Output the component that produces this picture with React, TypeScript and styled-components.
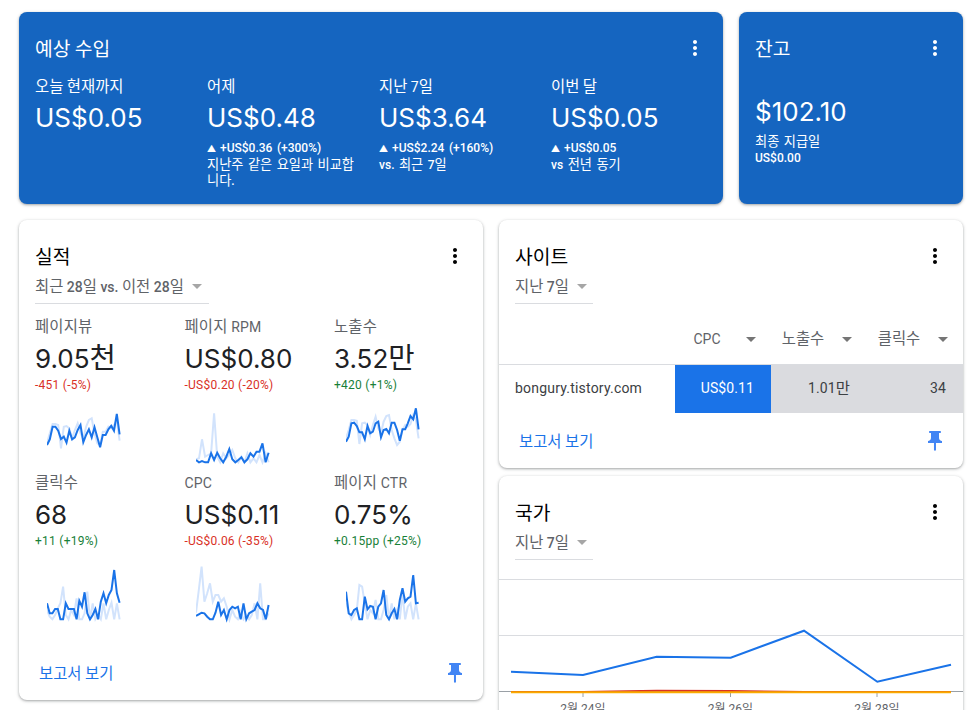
import React from 'react';
import styled, { createGlobalStyle } from 'styled-components';

const GlobalStyle = createGlobalStyle`
  html, body {
    margin: 0;
    padding: 0;
    background: #fff;
    font-family: Roboto, "Noto Sans CJK KR", sans-serif;
  }
`;

const DOTS =
  'M12 8c1.1 0 2-.9 2-2s-.9-2-2-2-2 .9-2 2 .9 2 2 2zm0 2c-1.1 0-2 .9-2 2s.9 2 2 2 2-.9 2-2-.9-2-2-2zm0 6c-1.1 0-2 .9-2 2s.9 2 2 2 2-.9 2-2-.9-2-2-2z';
const PIN =
  'M16 9V4h1c.55 0 1-.45 1-1s-.45-1-1-1H7c-.55 0-1 .45-1 1s.45 1 1 1h1v5c0 1.66-1.34 3-3 3v2h5.97v7l1 1 1-1v-7H19v-2c-1.66 0-3-1.34-3-3z';

// korean glyphs in the reference run wider than Noto at the same size
const ko = (text: string) =>
  text.split(/([가-힣]+)/).map((part, i) => (/[가-힣]/.test(part) ? <Ko key={i}>{part}</Ko> : part));

const MoreIcon = ({ light }: { light?: boolean }) => (
  <svg width="24" height="24" viewBox="0 0 24 24" fill={light ? '#fff' : '#000'}>
    <path d={DOTS} />
  </svg>
);

const PinIcon = () => (
  <svg width="24" height="24" viewBox="0 0 24 24" fill="#4285f4">
    <path d={PIN} />
  </svg>
);

const Spark = ({ dark, light, shift = 0 }: { dark: number[]; light: number[]; shift?: number }) => {
  const toPoints = (data: number[]) =>
    data.map((v, i) => `${((i * 72.6) / (data.length - 1)).toFixed(1)},${((v + shift) / 3).toFixed(1)}`).join(' ');
  return (
    <SparkSvg viewBox="0 0 80 71">
      <polyline points={toPoints(light)} fill="none" stroke="#d2e3fc" strokeWidth="2" />
      <polyline points={toPoints(dark)} fill="none" stroke="#1a73e8" strokeWidth="2" />
    </SparkSvg>
  );
};

const earnings = [
  { label: '오늘 현재까지', value: 'US$0.05', change: '', note: '' },
  { label: '어제', value: 'US$0.48', change: '+US$0.36 (+300%)', note: '지난주 같은 요일과 비교합니다.' },
  { label: '지난 7일', value: 'US$3.64', change: '+US$2.24 (+160%)', note: 'vs. 최근 7일' },
  { label: '이번 달', value: 'US$0.05', change: '+US$0.05', note: 'vs 전년 동기' },
];

const metrics = [
  {
    label: '페이지뷰',
    value: '9.05천',
    delta: '-451 (-5%)',
    up: false,
    dark: [135, 118, 80, 80, 92, 117, 110, 128, 92, 118, 112, 90, 75, 127, 105, 88, 112, 82, 112, 142, 105, 105, 88, 77, 92, 42, 103],
    light: [130, 100, 72, 72, 75, 145, 80, 78, 85, 115, 90, 70, 100, 115, 80, 60, 55, 100, 130, 135, 95, 95, 80, 85, 75, 60, 122],
  },
  {
    label: '페이지 RPM',
    value: 'US$0.80',
    delta: '-US$0.20 (-20%)',
    up: false,
    dark: [180, 187, 183, 187, 187, 160, 180, 158, 175, 187, 170, 147, 178, 187, 180, 172, 187, 178, 160, 170, 155, 155, 130, 187, 158],
    light: [178, 175, 118, 170, 165, 160, 40, 170, 187, 160, 175, 165, 150, 175, 187, 170, 187, 160, 187, 175, 187, 165, 187, 160, 187],
  },
  {
    label: '노출수',
    value: '3.52만',
    delta: '+420 (+1%)',
    up: true,
    dark: [125, 110, 70, 68, 78, 97, 97, 118, 78, 100, 95, 70, 65, 112, 90, 87, 100, 68, 68, 90, 122, 88, 88, 70, 48, 58, 25, 88],
    light: [115, 90, 60, 60, 62, 132, 70, 68, 75, 105, 75, 50, 85, 100, 65, 48, 45, 90, 115, 135, 125, 90, 75, 80, 72, 45, 60, 115],
  },
  {
    label: '클릭수',
    value: '68',
    delta: '+11 (+19%)',
    up: true,
    dark: [130, 160, 160, 147, 147, 178, 178, 130, 147, 147, 147, 178, 122, 140, 97, 160, 178, 165, 147, 178, 125, 100, 130, 105, 90, 30, 100, 128],
    light: [150, 170, 178, 165, 145, 130, 80, 165, 178, 150, 165, 115, 178, 178, 160, 95, 178, 130, 178, 165, 178, 130, 178, 150, 128, 178, 130, 178],
  },
  {
    label: 'CPC',
    value: 'US$0.11',
    delta: '-US$0.06 (-35%)',
    up: false,
    dark: [168, 163, 158, 160, 170, 178, 178, 158, 125, 165, 150, 178, 150, 140, 145, 140, 178, 130, 178, 160, 155, 150, 130, 145, 150, 178, 135],
    light: [158, 90, 20, 125, 100, 70, 125, 105, 105, 125, 115, 140, 178, 150, 170, 178, 155, 178, 165, 178, 165, 130, 178, 70, 178, 178, 160],
  },
  {
    label: '페이지 CTR',
    value: '0.75%',
    delta: '+0.15pp (+25%)',
    up: true,
    dark: [95, 160, 165, 150, 145, 178, 178, 110, 148, 138, 140, 178, 140, 130, 90, 165, 178, 160, 147, 178, 120, 85, 125, 115, 110, 45, 130, 128],
    light: [130, 155, 178, 165, 150, 75, 80, 130, 178, 150, 160, 120, 178, 178, 150, 105, 178, 130, 178, 150, 178, 100, 178, 140, 130, 178, 130, 178],
  },
];

const siteCols = ['CPC', '노출수', '클릭수'];

const App = () => {
  return (
    <Page>
      <GlobalStyle />
      <Row>
        <BlueCard $width={704}>
          <TitleRow>
            <Title $light>{ko('예상 수입')}</Title>
            <MoreIcon light />
          </TitleRow>
          <EarningsGrid>
            {earnings.map((e) => (
              <div key={e.label}>
                <BlueLabel>{ko(e.label)}</BlueLabel>
                <BigValue>{e.value}</BigValue>
                <BlueNote>
                  {e.change && (
                    <div>
                      <UpMark>▲</UpMark>
                      {e.change}
                    </div>
                  )}
                  {e.note && <div>{ko(e.note)}</div>}
                </BlueNote>
              </div>
            ))}
          </EarningsGrid>
        </BlueCard>
        <BlueCard $width={224}>
          <TitleRow>
            <Title $light>{ko('잔고')}</Title>
            <MoreIcon light />
          </TitleRow>
          <BalanceValue>$102.10</BalanceValue>
          <BlueNote>
            <div>{ko('최종 지급일')}</div>
            <div>US$0.00</div>
          </BlueNote>
        </BlueCard>
      </Row>
      <Row>
        <WhiteCard $height={480}>
          <TitleRow>
            <Title>{ko('실적')}</Title>
            <MoreIcon />
          </TitleRow>
          <Dropdown $width={174}>
            <span>{ko('최근 28일 vs. 이전 28일')}</span>
            <Caret />
          </Dropdown>
          <MetricGrid>
            {metrics.map((m, i) => (
              <div key={m.label}>
                <MetricLabel>{ko(m.label)}</MetricLabel>
                <MetricValue>{ko(m.value)}</MetricValue>
                <Delta $up={m.up}>{m.delta}</Delta>
                <Spark dark={m.dark} light={m.light} shift={i > 2 ? 12 : 0} />
              </div>
            ))}
          </MetricGrid>
          <CardFooter>
            <ReportLink>{ko('보고서 보기')}</ReportLink>
            <PinIcon />
          </CardFooter>
        </WhiteCard>
        <Column>
          <WhiteCard $height={248}>
            <TitleRow>
              <Title>{ko('사이트')}</Title>
              <MoreIcon />
            </TitleRow>
            <Dropdown $width={78}>
              <span>{ko('지난 7일')}</span>
              <Caret />
            </Dropdown>
            <TableHead>
              {siteCols.map((c) => (
                <HeadCell key={c}>
                  <HeadText>{ko(c)}</HeadText>
                  <Caret $dark />
                </HeadCell>
              ))}
            </TableHead>
            <TableRow>
              <SiteName>bongury.tistory.com</SiteName>
              <ValueCell $blue>US$0.11</ValueCell>
              <ValueCell>{ko('1.01만')}</ValueCell>
              <ValueCell>34</ValueCell>
            </TableRow>
            <CardFooter>
              <ReportLink>{ko('보고서 보기')}</ReportLink>
              <PinIcon />
            </CardFooter>
          </WhiteCard>
          <WhiteCard $height={300}>
            <TitleRow>
              <Title>{ko('국가')}</Title>
              <MoreIcon />
            </TitleRow>
            <Dropdown $width={78}>
              <span>{ko('지난 7일')}</span>
              <Caret />
            </Dropdown>
            <CountryChart viewBox="0 0 464 150">
              <line x1="0" x2="464" y1="9.5" y2="9.5" stroke="#dadce0" />
              <line x1="0" x2="464" y1="65.5" y2="65.5" stroke="#dadce0" />
              <line x1="0" x2="464" y1="121.5" y2="121.5" stroke="#9aa0a6" />
              {[84, 231.5, 378].map((x) => (
                <line key={x} x1={x} x2={x} y1="121.5" y2="127" stroke="#9aa0a6" />
              ))}
              <polyline
                points="12,101.7 84,105 157.7,86.7 231.7,87.7 305,60.7 378.3,111.7 452,94.7"
                fill="none"
                stroke="#1a73e8"
                strokeWidth="2"
              />
              <polyline
                points="12,122 84,122 157.7,120.8 231.7,121 305,122 378.3,122 452,122"
                fill="none"
                stroke="#d93025"
                strokeWidth="2"
              />
              <line x1="12" x2="452" y1="122.3" y2="122.3" stroke="#f9ab00" strokeWidth="2" />
              {[
                [84, '2월 24일'],
                [231.5, '2월 26일'],
                [378, '2월 28일'],
              ].map(([x, label]) => (
                <AxisText key={label} x={x} y="143" textAnchor="middle">
                  {label}
                </AxisText>
              ))}
            </CountryChart>
          </WhiteCard>
        </Column>
      </Row>
    </Page>
  );
};

const Ko = styled.span`
  font-family: "Noto Sans CJK KR", sans-serif;
  font-size: 1.1em;
  font-weight: 400;
  line-height: 1;
`;
const Page = styled.div`
  height: 710px;
  overflow: hidden;
  padding: 12px 6px 0 19px;
  box-sizing: border-box;
  display: flex;
  flex-direction: column;
  gap: 16px;
`;
const Row = styled.div`
  display: flex;
  gap: 16px;
  align-items: flex-start;
`;
const Column = styled.div`
  display: flex;
  flex-direction: column;
  gap: 8px;
`;
const BlueCard = styled.section<{ $width: number }>`
  width: ${(p) => p.$width}px;
  height: 192px;
  flex: none;
  box-sizing: border-box;
  padding: 24px 0 0 16px;
  border-radius: 8px;
  background: #1565c0;
  color: #fff;
  box-shadow: 0 1px 2px rgba(60, 64, 67, 0.3), 0 1px 3px 1px rgba(60, 64, 67, 0.15);
`;
const WhiteCard = styled.section<{ $height: number }>`
  width: 464px;
  height: ${(p) => p.$height}px;
  flex: none;
  box-sizing: border-box;
  padding-top: 24px;
  border-radius: 8px;
  background: #fff;
  display: flex;
  flex-direction: column;
  box-shadow: 0 1px 2px rgba(60, 64, 67, 0.3), 0 1px 3px 1px rgba(60, 64, 67, 0.15);
`;
const TitleRow = styled.div`
  display: flex;
  justify-content: space-between;
  align-items: center;
  height: 24px;
  padding-right: 16px;
  ${WhiteCard} > & {
    padding-left: 16px;
  }
`;
const Title = styled.h2<{ $light?: boolean }>`
  margin: 0;
  padding-top: 3px;
  font-size: 17.5px;
  font-weight: 400;
  line-height: 21px;
  color: ${(p) => (p.$light ? '#fff' : '#000')};
`;
const EarningsGrid = styled.div`
  display: grid;
  grid-template-columns: repeat(4, 172px);
  margin-top: 16px;
`;
const BlueLabel = styled.div`
  padding-top: 1px;
  font-size: 14px;
  line-height: 20px;
`;
const BigValue = styled.div`
  font-family: Inter, sans-serif;
  font-size: 26px;
  line-height: 36px;
  margin-top: 3px;
`;
const BalanceValue = styled.div`
  font-family: Inter, sans-serif;
  font-size: 26px;
  line-height: 36px;
  margin-top: 34px;
`;
const BlueNote = styled.div`
  width: 150px;
  margin-top: 4px;
  font-size: 12px;
  font-weight: 500;
  line-height: 16px;
  word-spacing: 1.5px;
  word-break: break-all;
`;
const UpMark = styled.span`
  display: inline-block;
  width: 13px;
  font-size: 9px;
`;
const Dropdown = styled.div<{ $width: number }>`
  width: ${(p) => p.$width}px;
  height: 28px;
  margin: 6px 0 0 16px;
  padding-top: 1px;
  box-sizing: content-box;
  border-bottom: 1px solid #dadce0;
  display: flex;
  align-items: flex-start;
  font-size: 14px;
  font-weight: 500;
  line-height: 24px;
  color: #5f6368;
  white-space: nowrap;
`;
const Caret = styled.i<{ $dark?: boolean }>`
  flex: none;
  width: 0;
  height: 0;
  margin: 9px 0 0 8px;
  border-left: 5px solid transparent;
  border-right: 5px solid transparent;
  border-top: 5px solid ${(p) => (p.$dark ? '#757575' : '#a6a6a6')};
`;
const MetricGrid = styled.div`
  display: grid;
  grid-template-columns: repeat(3, 149.5px);
  padding-left: 16px;
  margin-top: 11px;
`;
const MetricLabel = styled.div`
  padding-top: 2px;
  font-size: 14px;
  line-height: 20px;
  letter-spacing: 0.2px;
  color: #5f6368;
`;
const MetricValue = styled.div`
  margin-top: 4px;
  height: 36px;
  font-family: Inter, sans-serif;
  font-size: 26px;
  line-height: 36px;
  color: #202124;
`;
const Delta = styled.div<{ $up: boolean }>`
  font-size: 12px;
  line-height: 16px;
  letter-spacing: 0.25px;
  color: ${(p) => (p.$up ? '#188038' : '#d93025')};
`;
const SparkSvg = styled.svg`
  display: block;
  width: 80px;
  height: 71px;
  margin: 7px 0 0 11.7px;
`;
const CardFooter = styled.div`
  margin-top: auto;
  height: 54px;
  padding: 0 16px 0 20px;
  display: flex;
  justify-content: space-between;
  align-items: center;
`;
const ReportLink = styled.a`
  font-size: 14px;
  color: #1a73e8;
`;
const TableHead = styled.div`
  display: grid;
  grid-template-columns: repeat(3, 96px);
  justify-content: end;
  height: 61px;
  box-sizing: border-box;
  padding-top: 25px;
  border-bottom: 1px solid #dadce0;
`;
const HeadCell = styled.div`
  display: flex;
  align-items: flex-start;
`;
const HeadText = styled.span`
  width: 64px;
  text-align: center;
  font-size: 14px;
  line-height: 20px;
  color: #5f6368;
  & + i {
    margin-left: 7px;
    margin-top: 8px;
  }
`;
const TableRow = styled.div`
  display: grid;
  grid-template-columns: 176px repeat(3, 96px);
  height: 48px;
  align-items: stretch;
  font-size: 14px;
  color: #3c4043;
`;
const SiteName = styled.div`
  padding: 0 0 2px 16px;
  display: flex;
  align-items: center;
  letter-spacing: 0.2px;
`;
const ValueCell = styled.div<{ $blue?: boolean }>`
  display: flex;
  align-items: center;
  justify-content: flex-end;
  padding: 0 17px 2px 0;
  letter-spacing: 0.1px;
  background: ${(p) => (p.$blue ? '#1a73e8' : '#dadbdf')};
  color: ${(p) => (p.$blue ? '#fff' : '#3c4043')};
`;
const CountryChart = styled.svg`
  display: block;
  width: 464px;
  height: 150px;
  margin-top: 10px;
`;
const AxisText = styled.text`
  font-family: Roboto, "Noto Sans CJK KR", sans-serif;
  font-size: 12px;
  fill: #5f6368;
`;

export default App;
